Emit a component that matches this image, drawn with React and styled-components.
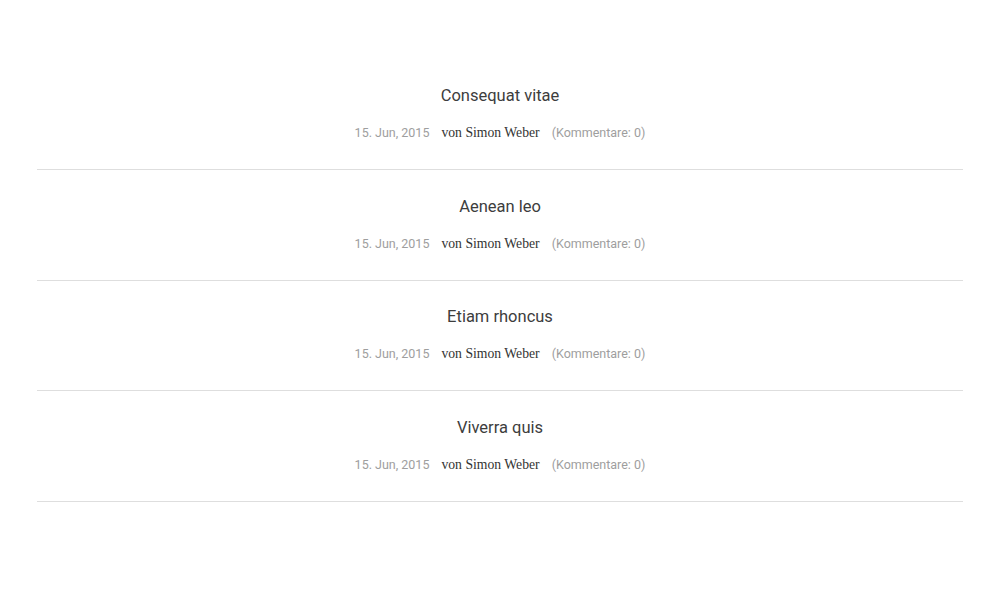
import styled, { createGlobalStyle } from "styled-components";

const GlobalStyle = createGlobalStyle`
  html, body {
    margin: 0;
    padding: 0;
    background: #fff;
  }
`;

const posts = [
  { title: "Consequat vitae" },
  { title: "Aenean leo" },
  { title: "Etiam rhoncus" },
  { title: "Viverra quis" },
];

export default function App() {
  return (
    <>
      <GlobalStyle />
      <Page>
        {posts.map((p) => (
          <Post key={p.title}>
            <Title>{p.title}</Title>
            <Meta>
              <Date>15. Jun, 2015</Date>
              <Author>von Simon Weber</Author>
              <Comments>(Kommentare: 0)</Comments>
            </Meta>
          </Post>
        ))}
      </Page>
    </>
  );
}

const Page = styled.div`
  padding: 59.33px 37px 0;
  width: 1000px;
  box-sizing: border-box;
`;

const Post = styled.article`
  box-sizing: border-box;
  height: 110.67px;
  padding-top: 26.67px;
  border-bottom: 1px solid #dedede;
  display: flex;
  flex-direction: column;
  align-items: center;
`;

const Title = styled.h2`
  margin: 0;
  font-family: Roboto, "Liberation Sans", sans-serif;
  font-weight: 400;
  font-size: 16.5px;
  line-height: 20px;
  color: #3d3d3d;
`;

const Meta = styled.div`
  margin-top: 18px;
  display: flex;
  gap: 12px;
  align-items: baseline;
  line-height: 18px;
`;

const Date = styled.span`
  font-family: Roboto, "Liberation Sans", sans-serif;
  font-size: 12.5px;
  color: #9e9e9e;
`;

const Author = styled.span`
  font-family: "Liberation Serif", serif;
  font-size: 13.7px;
  color: #333;
`;

const Comments = styled(Date)``;
